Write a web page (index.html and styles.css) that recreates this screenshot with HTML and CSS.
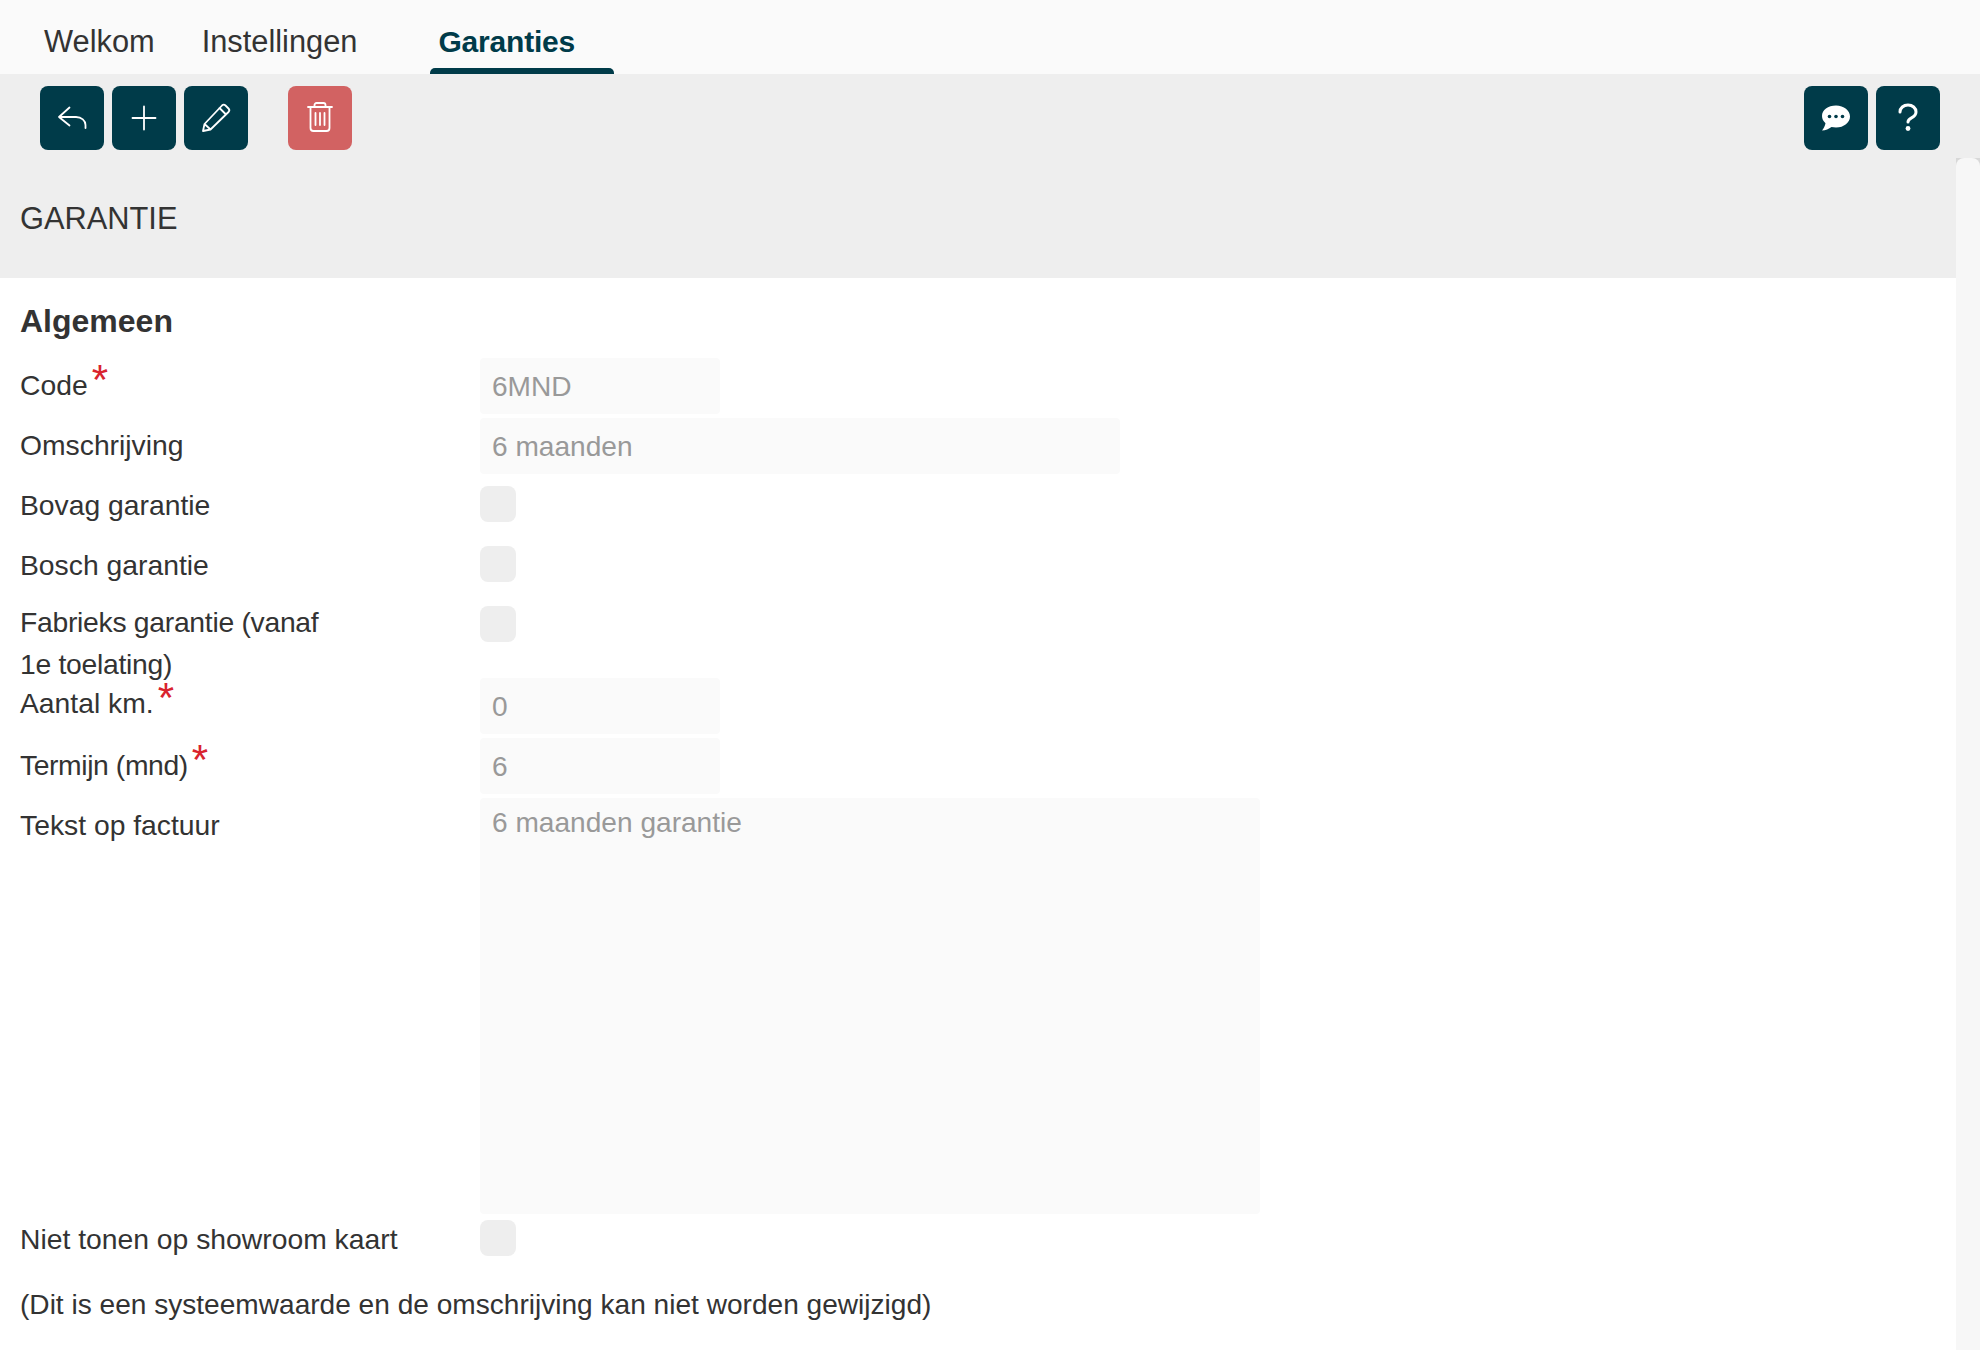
FILE: index.html
```html
<!DOCTYPE html>
<html lang="nl">
<head>
<meta charset="utf-8">
<title>Garantie</title>
<link rel="stylesheet" href="styles.css">
</head>
<body>
<nav class="tabs">
  <a class="tab">Welkom</a>
  <a class="tab tab-second">Instellingen</a>
  <a class="tab tab-active">Garanties</a>
</nav>
<div class="toolbar">
  <div class="tool-group">
    <button class="btn"><svg class="icon" viewBox="0 0 32 32"><path d="M13.500 5.500 3 15l10.500 8.500M3.500 15H20c5.500 0 9.500 3.500 9.500 8v3"/></svg></button>
    <button class="btn"><svg class="icon" viewBox="0 0 32 32"><path d="M16 4.500v23M4.500 16h23"/></svg></button>
    <button class="btn"><svg class="icon" viewBox="0 0 32 32"><path d="M3 29l1.500-7L22 3.500a2.500 2.500 0 0 1 3.500 0l3 3a2.500 2.500 0 0 1 0 3.500L10.500 27.500zM4.500 22l6 5.500M19.500 6l6.500 6.500"/></svg></button>
    <button class="btn btn-danger"><svg class="icon" viewBox="0 0 32 32"><path d="M4 5h24M6.500 5v21a3 3 0 0 0 3 3h13a3 3 0 0 0 3-3V5M10.500 5V3a2 2 0 0 1 2-2h7a2 2 0 0 1 2 2v2M11.500 11v12M16 11v12M20.500 11v12"/></svg></button>
  </div>
  <div class="tool-group">
    <button class="btn"><svg class="icon" viewBox="0 0 32 32"><path class="solid" d="M16 3.500C8 3.500 2 8 2 14c0 2.800 1.300 5.200 3.500 7.200C5 24 3.500 26.500 2 28.500c3.500-.2 7-1.500 9.500-3.500 1.400.3 2.900.5 4.500.5 8 0 14-5 14-11S24 3.500 16 3.500z"/><circle class="dot" cx="9.500" cy="14.500" r="1.800"/><circle class="dot" cx="16" cy="14.500" r="1.800"/><circle class="dot" cx="22.500" cy="14.500" r="1.800"/></svg></button>
    <button class="btn"><svg class="icon icon-bold" viewBox="0 0 32 32"><path d="M8 10c0-4 3.500-7 8-7s8 3 8 7c0 3-2 4.500-4.500 5.800-2.200 1.200-3.500 2.200-3.500 4.200"/><circle class="solid" cx="16" cy="26.500" r="2.400"/></svg></button>
  </div>
</div>
<div class="page">
  <main class="content">
    <header class="title-band"><h1 class="title">GARANTIE</h1></header>
    <section class="form">
      <h2 class="section-title">Algemeen</h2>
      <div class="row">
        <div class="label">Code<span class="req">*</span></div>
        <div class="field field-short">6MND</div>
      </div>
      <div class="row">
        <div class="label">Omschrijving</div>
        <div class="field field-long">6 maanden</div>
      </div>
      <div class="row">
        <div class="label">Bovag garantie</div>
        <span class="check"></span>
      </div>
      <div class="row">
        <div class="label">Bosch garantie</div>
        <span class="check"></span>
      </div>
      <div class="row row-tall">
        <div class="label label-wrap">Fabrieks garantie (vanaf<br>1e toelating)</div>
        <span class="check"></span>
      </div>
      <div class="row">
        <div class="label label-high">Aantal km.<span class="req">*</span></div>
        <div class="field field-short">0</div>
      </div>
      <div class="row">
        <div class="label"><span class="tighter">Termijn (mnd)</span><span class="req">*</span></div>
        <div class="field field-short">6</div>
      </div>
      <div class="row row-area">
        <div class="label">Tekst op factuur</div>
        <div class="field field-area">6 maanden garantie</div>
      </div>
      <div class="row row-last">
        <div class="label label-last">Niet tonen op showroom kaart</div>
        <span class="check check-last"></span>
      </div>
      <p class="note">(Dit is een systeemwaarde en de omschrijving kan niet worden gewijzigd)</p>
    </section>
  </main>
  <div class="scrollbar"></div>
</div>
</body>
</html>
```
FILE: styles.css
```css
* { box-sizing: border-box; }
html, body { margin: 0; height: 1350px; overflow: hidden; }
body {
  font-family: "Liberation Sans", Arial, sans-serif;
  font-size: 28.3px;
  color: #333;
  background: #fff;
  display: flex;
  flex-direction: column;
}
.tabs {
  height: 74px;
  flex: none;
  background: #fafafa;
  display: flex;
  gap: 35px;
  padding-left: 36px;
  font-size: 30.8px;
}
.tab {
  height: 74px;
  padding: 24px 8px 0;
  line-height: 36px;
  border-bottom: 6px solid transparent;
}
.tab-second { margin-left: -4px; }
.tab-active {
  position: relative;
  margin-left: 30px;
  width: 184px;
  color: #003b49;
  font-size: 30px;
  font-weight: 700;
  letter-spacing: -0.2px;
}
.tab-active::after {
  content: "";
  position: absolute;
  left: 0;
  right: 0;
  bottom: -6px;
  height: 6px;
  background: #003b49;
  border-radius: 5px 5px 0 0;
}
.toolbar {
  height: 84px;
  flex: none;
  background: #eee;
  display: flex;
  justify-content: space-between;
  padding: 12px 40px 0;
}
.tool-group { display: flex; gap: 8px; }
.btn {
  width: 64px;
  height: 64px;
  padding: 0;
  border: 0;
  border-radius: 8px;
  background: #003b49;
  display: flex;
  align-items: center;
  justify-content: center;
}
.btn-danger { background: #d26262; margin-left: 32px; }
.icon {
  width: 32px;
  height: 32px;
  fill: none;
  stroke: #fff;
  stroke-width: 1.8;
  stroke-linecap: round;
  stroke-linejoin: round;
}
.icon-bold { stroke-width: 3; }
.icon .solid { fill: #fff; stroke: none; }
.icon .dot { fill: #003b49; stroke: none; }
.page { flex: 1; display: flex; min-height: 0; background: #d8d8d8; }
.content { flex: 1; min-width: 0; background: #fff; }
.scrollbar {
  width: 24px;
  flex: none;
  background: #f7f7f7;
  border-radius: 8px 8px 0 0;
}
.title-band {
  height: 120px;
  background: #eee;
  padding: 1px 20px 0;
  display: flex;
  align-items: center;
}
.title { margin: 0; font-size: 30.8px; font-weight: 400; }
.form { padding: 0 20px; }
.section-title {
  margin: 0;
  height: 80px;
  font-size: 32px;
  font-weight: 700;
  line-height: 44px;
  padding-top: 21px;
}
.row {
  height: 60px;
  display: grid;
  grid-template-columns: 460px 1fr;
  align-items: start;
}
.row-tall { height: 80px; }
.row-area { height: 420px; }
.row-last { height: 62px; }
.label { line-height: 42px; padding-top: 6px; white-space: nowrap; }
.label-wrap { padding-top: 3px; letter-spacing: -0.28px; }
.label-high { padding-top: 4px; }
.label-last { padding-top: 0; }
.tighter { letter-spacing: -0.4px; }
.req {
  display: inline-block;
  height: 20px;
  color: #d9232e;
  font-size: 42px;
  font-weight: 400;
  line-height: 20px;
  margin-left: 4px;
  vertical-align: 1px;
}
.field {
  height: 56px;
  background: #fafafa;
  border-radius: 4px;
  color: #999;
  padding: 0 12px;
  font-size: 28.1px;
  line-height: 57px;
}
.field-short { width: 240px; }
.field-long { width: 640px; }
.field-area { width: 780px; height: 416px; line-height: 49px; }
.check {
  display: block;
  width: 36px;
  height: 36px;
  margin-top: 8px;
  background: #eee;
  border-radius: 8px;
}
.check-last { margin-top: 2px; }
.note { margin: 0; font-size: 28.08px; line-height: 42px; padding-top: 4px; }
```
